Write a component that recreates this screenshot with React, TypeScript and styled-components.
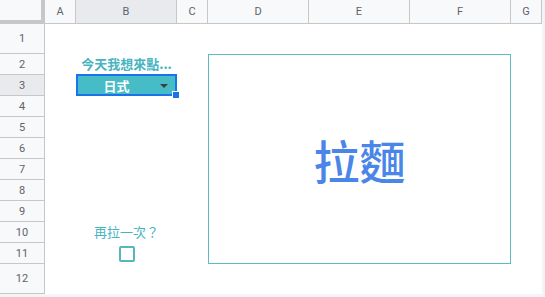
import React from 'react'
import styled, { createGlobalStyle } from 'styled-components'

const teal = '#47b4c0'
const headerBorder = '#c7c7c7'

const GlobalStyle = createGlobalStyle`
  html, body {
    margin: 0;
    padding: 0;
    background: #f1f3f4;
  }
  body {
    font-family: Roboto, "Noto Sans CJK TC", Arial, sans-serif;
  }
`

const Page = styled.div`
  width: 545px;
  height: 297px;
  background: #f3f4f5;
  overflow: hidden;
`

const Sheet = styled.div`
  display: grid;
  grid-template-columns: 45px 31px 101px 31px 101px 101px 101px 31px;
  grid-template-rows: 24px 30px repeat(10, 21px) 30px;
  width: 542px;
  background: #fff;
`

const Corner = styled.div`
  grid-column: 1;
  grid-row: 1;
  box-sizing: border-box;
  background: #f8f9fa;
  border-right: 4px solid ${headerBorder};
  border-bottom: 4px solid ${headerBorder};
`

const ColHeader = styled.div<{ $selected?: boolean }>`
  grid-row: 1;
  box-sizing: border-box;
  display: flex;
  align-items: center;
  justify-content: center;
  background: ${(p) => (p.$selected ? '#e8eaed' : '#f8f9fa')};
  border-right: 1px solid ${headerBorder};
  border-bottom: 1px solid ${headerBorder};
  color: #5f6368;
  font-size: 11px;
`

const RowHeader = styled.div<{ $selected?: boolean }>`
  grid-column: 1;
  box-sizing: border-box;
  display: flex;
  align-items: center;
  justify-content: center;
  background: ${(p) => (p.$selected ? '#e8eaed' : '#f8f9fa')};
  border-right: 1px solid ${headerBorder};
  border-bottom: 1px solid ${headerBorder};
  color: #5f6368;
  font-size: 11px;
`

const Cell = styled.div<{ $col: number; $row: number; $align?: string }>`
  grid-column: ${(p) => p.$col};
  grid-row: ${(p) => p.$row};
  display: flex;
  align-items: ${(p) => p.$align || 'flex-end'};
  justify-content: center;
  font-family: "Noto Sans CJK TC", Roboto, sans-serif;
`

const Prompt = styled.span<{ $bold?: boolean }>`
  color: ${teal};
  font-size: 13px;
  font-weight: ${(p) => (p.$bold ? 700 : 400)};
  line-height: 16px;
  padding-bottom: 3px;
`

const Dropdown = styled.div`
  grid-column: 3;
  grid-row: 4;
  position: relative;
  box-sizing: border-box;
  display: flex;
  align-items: center;
  justify-content: center;
  margin: -1px 0 0 0;
  padding-right: 20px;
  background: #45bcc6;
  border: 2px solid #1a73e8;
  color: #fff;
  font-family: "Noto Sans CJK TC", Roboto, sans-serif;
  font-size: 13px;
  font-weight: 700;
`

const Arrow = styled.span`
  position: absolute;
  right: 7px;
  top: 8px;
  width: 0;
  height: 0;
  border-left: 4px solid transparent;
  border-right: 4px solid transparent;
  border-top: 4px solid #3c4043;
`

const Handle = styled.span`
  position: absolute;
  right: -5px;
  bottom: -5px;
  width: 6px;
  height: 6px;
  background: #1a73e8;
  border: 1px solid #fff;
`

const Merged = styled.div`
  grid-column: 5 / 8;
  grid-row: 3 / 13;
  box-sizing: border-box;
  display: flex;
  align-items: center;
  justify-content: center;
  border: 1.5px solid #5cbcc1;
  color: #4a86e8;
  font-family: "Noto Sans CJK TC", sans-serif;
  font-size: 46px;
  font-weight: 500;
`

const Checkbox = styled.span`
  box-sizing: border-box;
  width: 16px;
  height: 16px;
  border: 2px solid #55b6bd;
  border-radius: 2px;
`

const cols = ['A', 'B', 'C', 'D', 'E', 'F', 'G']
const rows = [1, 2, 3, 4, 5, 6, 7, 8, 9, 10, 11, 12]

const App = () => {
  return (
    <Page>
      <GlobalStyle />
      <Sheet>
        <Corner />
        {cols.map((c, i) => (
          <ColHeader key={c} $selected={c === 'B'} style={{ gridColumn: i + 2 }}>
            {c}
          </ColHeader>
        ))}
        {rows.map((r) => (
          <RowHeader key={r} $selected={r === 3} style={{ gridRow: r + 1 }}>
            {r}
          </RowHeader>
        ))}

        <Cell $col={3} $row={3}>
          <Prompt $bold>今天我想來點...</Prompt>
        </Cell>
        <Dropdown>
          日式
          <Arrow />
          <Handle />
        </Dropdown>

        <Merged>拉麵</Merged>

        <Cell $col={3} $row={11}>
          <Prompt>再拉一次？</Prompt>
        </Cell>
        <Cell $col={3} $row={12} $align="center">
          <Checkbox />
        </Cell>
      </Sheet>
    </Page>
  )
}

export default App
